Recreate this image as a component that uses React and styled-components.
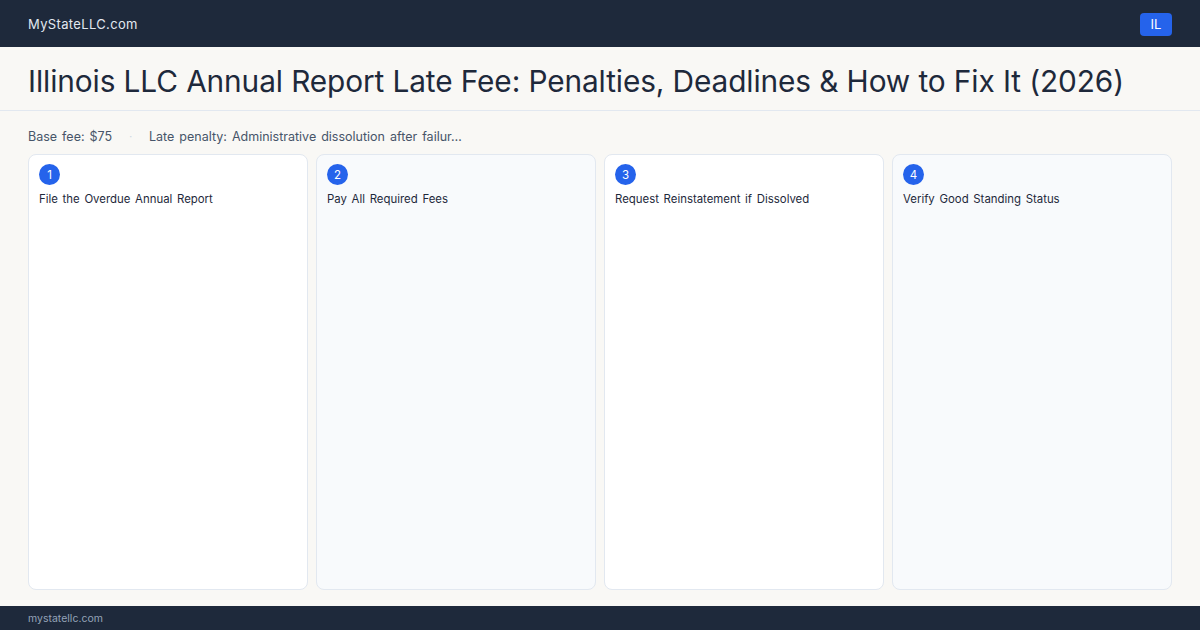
import React from "react";
import styled, { createGlobalStyle } from "styled-components";

const GlobalStyle = createGlobalStyle`
  html, body {
    margin: 0;
    padding: 0;
    background: #f9f8f5;
  }
  body {
    font-family: Inter, "Noto Sans", sans-serif;
    color: #1e293b;
  }
`;

const Page = styled.div`
  width: 1200px;
  height: 630px;
  display: flex;
  flex-direction: column;
  background: #f9f8f5;
  overflow: hidden;
`;

const TopBar = styled.header`
  height: 47px;
  flex: none;
  background: #1e293b;
  display: flex;
  align-items: center;
  justify-content: space-between;
  padding: 0 28px;
  box-sizing: border-box;
`;

const Brand = styled.span`
  color: #e2e8f0;
  font-size: 13px;
  letter-spacing: 0.35px;
`;

const StateBadge = styled.span`
  background: #2563eb;
  color: #ffffff;
  font-size: 13px;
  height: 23px;
  min-width: 32px;
  border-radius: 4px;
  display: flex;
  align-items: center;
  justify-content: center;
  box-sizing: border-box;
  margin-top: 1px;
`;

const TitleBlock = styled.div`
  height: 64px;
  flex: none;
  border-bottom: 1px solid #e2e8f0;
  display: flex;
  align-items: center;
  padding: 5px 28px 0;
  box-sizing: border-box;
`;

const Title = styled.h1`
  margin: 0;
  font-size: 29.8px;
  font-weight: 400;
  color: #1e293b;
  letter-spacing: -0.1px;
  white-space: nowrap;
`;

const Body = styled.main`
  flex: 1;
  display: flex;
  flex-direction: column;
  padding: 17px 28px 16px;
  gap: 10px;
  min-height: 0;
`;

const Meta = styled.div`
  display: flex;
  align-items: center;
  gap: 17px;
  font-size: 12.5px;
  color: #475569;
  height: 16px;
  word-spacing: 1.5px;
`;

const Dot = styled.span`
  color: #cbd5e1;
  font-size: 10px;
`;

const Steps = styled.div`
  flex: 1;
  display: grid;
  grid-template-columns: repeat(4, 1fr);
  gap: 8px;
  min-height: 0;
`;

const Step = styled.div`
  background: ${(p) => (p.$alt ? "#f8fafc" : "#ffffff")};
  border: 1px solid #e2e8f0;
  border-radius: 8px;
  padding: 9px 10px;
  display: flex;
  flex-direction: column;
  gap: 7px;
`;

const Num = styled.span`
  width: 21px;
  height: 21px;
  border-radius: 50%;
  background: #2563eb;
  color: #ffffff;
  font-size: 11.5px;
  display: flex;
  align-items: center;
  justify-content: center;
`;

const StepTitle = styled.div`
  font-size: 11.4px;
  color: #1e293b;
  word-spacing: 1.5px;
`;

const Footer = styled.footer`
  height: 24px;
  flex: none;
  background: #1e293b;
  display: flex;
  align-items: center;
  padding: 0 28px;
`;

const FooterText = styled.span`
  font-size: 10.5px;
  color: #94a3b8;
`;

const steps = [
  "File the Overdue Annual Report",
  "Pay All Required Fees",
  "Request Reinstatement if Dissolved",
  "Verify Good Standing Status",
];

export default function App() {
  return (
    <>
      <GlobalStyle />
      <Page>
        <TopBar>
          <Brand>MyStateLLC.com</Brand>
          <StateBadge>IL</StateBadge>
        </TopBar>
        <TitleBlock>
          <Title>
            Illinois LLC Annual Report Late Fee: Penalties, Deadlines &amp; How to Fix It (2026)
          </Title>
        </TitleBlock>
        <Body>
          <Meta>
            <span>Base fee: $75</span>
            <Dot>·</Dot>
            <span>Late penalty: Administrative dissolution after failur…</span>
          </Meta>
          <Steps>
            {steps.map((s, i) => (
              <Step key={s} $alt={i % 2 === 1}>
                <Num>{i + 1}</Num>
                <StepTitle>{s}</StepTitle>
              </Step>
            ))}
          </Steps>
        </Body>
        <Footer>
          <FooterText>mystatellc.com</FooterText>
        </Footer>
      </Page>
    </>
  );
}
